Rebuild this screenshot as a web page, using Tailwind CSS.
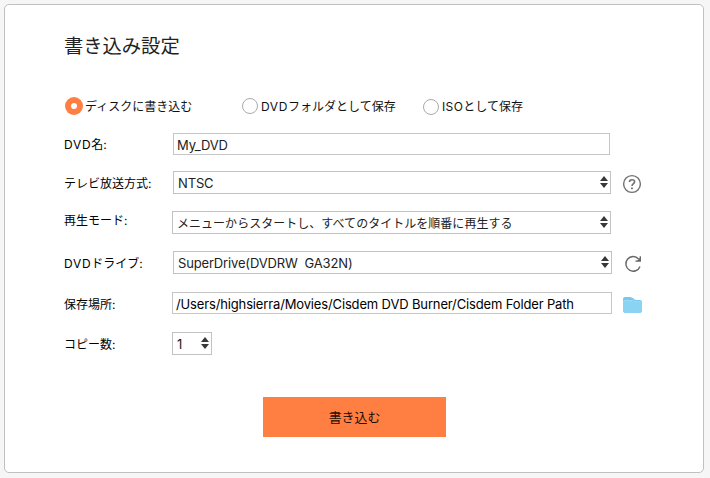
<!DOCTYPE html>
<html lang="ja">
<head>
<meta charset="utf-8">
<title>書き込み設定</title>
<script src="https://cdn.jsdelivr.net/npm/@tailwindcss/browser@4"></script>
</head>
<body class="h-[478px] w-[710px] overflow-hidden bg-[#f6f6f6] pt-1 pl-1 font-['Inter','Noto_Sans_CJK_JP',sans-serif] text-[12px] text-black">
<svg class="hidden"><symbol id="step" viewBox="0 0 8 12"><path d="M4 0 8 5H0ZM0 7h8L4 12Z" fill="#383838"/></symbol></svg>
<main class="flex h-[469px] w-[700px] flex-col rounded-[5px] border border-[#c0c0c0] bg-white pl-[59px] whitespace-pre">
  <h1 class="mt-[26px] h-[30px] text-[19.3px] leading-[30px] text-[#222]">書き込み設定</h1>
  <div class="mt-[35px] flex h-5 items-center text-[#111]">
    <label class="flex w-[178px] items-center gap-[2px] pl-px"><span class="flex size-[18px] items-center justify-center rounded-full bg-[#ff7e41]"><span class="size-[6px] rounded-full bg-white"></span></span><span class="pt-[2px]">ディスクに書き込む</span></label>
    <label class="flex w-[181px] items-center gap-[3px]"><span class="size-4 rounded-full border border-[#aaa]"></span><span class="pt-[2px]"><span class="tracking-[0.6px]">DVD</span>フォルダとして保存</span></label>
    <label class="flex items-center gap-[3px] pt-px"><span class="size-4 rounded-full border border-[#aaa]"></span><span><span class="tracking-[0.4px]">ISO</span>として保存</span></label>
  </div>
  <div class="mt-[17px] flex h-[22px] items-center">
    <span class="w-[109px] pt-[2px]"><span class="tracking-[0.7px]">DVD</span>名:</span>
    <div class="flex h-[22px] w-[437px] items-center border border-[#c6c6c6] pt-[3px] pl-[3px] text-[13px] tracking-[-0.15px] text-[#222]">My_DVD</div>
  </div>
  <div class="mt-4 flex h-[23px] items-center">
    <span class="w-[109px] pt-[2px]">テレビ放送方式:</span>
    <div class="flex h-[23px] w-[438px] items-center justify-between border border-[#c2c2c2] pr-[2px] pl-1 text-[13px] tracking-[-0.15px] text-[#222]"><span class="pt-[3px]">NTSC</span><svg class="mb-[2px] h-3 w-2"><use href="#step"/></svg></div>
    <svg class="mt-[3px] ml-[11px] size-5" viewBox="0 0 20 20" fill="none" stroke="#707070"><circle cx="10" cy="10" r="8.4" stroke-width="1.4"/><path d="M7.5 8C7.5 4.9 12.6 5 12.6 7.8 12.6 9.6 10 9.7 10 12" stroke-width="1.6"/><path d="M10 13.4v1.8" stroke-width="1.8"/></svg>
  </div>
  <div class="mt-[17px] flex h-[23px] items-center">
    <span class="w-[108px] pb-[4px]">再生モード:</span>
    <div class="flex h-[23px] w-[439px] items-center justify-between border border-[#c2c2c2] pr-[2px] pl-1 text-[#222]"><span class="pt-[3px] tracking-[0.03px]">メニューからスタートし、すべてのタイトルを順番に再生する</span><svg class="mb-[2px] h-3 w-2"><use href="#step"/></svg></div>
  </div>
  <div class="mt-[17px] flex h-[23px] items-center">
    <span class="w-[109px] pt-[2px]"><span class="tracking-[0.7px]">DVD</span>ドライブ:</span>
    <div class="flex h-[23px] w-[439px] items-center justify-between border border-[#c2c2c2] pr-[2px] pl-1 text-[13px] tracking-[-0.16px] text-[#222]"><span class="pt-[3px]">SuperDrive(DVDRW  GA32N)</span><svg class="mb-[2px] h-3 w-2"><use href="#step"/></svg></div>
    <svg class="mt-[3px] ml-[11px] size-5" viewBox="0 0 20 20" fill="none" stroke="#666" stroke-width="1.4"><path d="M17 12.4A7.3 7.3 0 1 1 15.6 5"/><path d="M17.3 2.2v4.9h-4.9" stroke-width="1.3"/><path d="M17.3 3.6v3.5h-3.5Z" fill="#666" stroke="none"/></svg>
  </div>
  <div class="mt-[18px] flex h-[22px] items-center">
    <span class="w-[108px] pt-[3px]">保存場所:</span>
    <div class="flex h-[22px] w-[440px] items-center border border-[#c6c6c6] pt-[3px] pl-[3px] text-[13px] tracking-[-0.145px]"><span>/Users/highsierra/Movies/Cisdem DVD Burner/Cisdem Folder Path</span></div>
    <svg class="mt-[3px] ml-[11px] h-4 w-[19px]" viewBox="0 0 19 16"><path d="M0 2Q0 0 2 0H7Q9 0 10.5 1.5T13.5 3H17Q19 3 19 5V13Q19 16 16 16H3Q0 16 0 13Z" fill="#74c9ee"/><path d="M0 4H9.5Q11 4 12 4.7T14 5.3H19V13Q19 16 16 16H3Q0 16 0 13Z" fill="#8ad3f3"/><path d="M.5 3.6H9.5Q11 3.6 12 4.3T14 4.8H18.5" stroke="#a8e0f7" stroke-width=".8" fill="none"/></svg>
  </div>
  <div class="mt-[18px] flex h-[23px] items-center">
    <span class="w-[108px] pt-[3px]">コピー数:</span>
    <div class="flex h-[23px] w-10 items-center justify-between border border-[#c2c2c2] pr-[2px] pl-1 text-[13px] text-[#222]"><span class="pt-[3px]">1</span><svg class="mb-[2px] h-3 w-2"><use href="#step"/></svg></div>
  </div>
  <button class="mt-[42px] ml-[199px] h-10 w-[183px] bg-[#ff7e41] pt-[2px] text-[12.9px] text-[#1c0d06]">書き込む</button>
</main>
</body>
</html>
